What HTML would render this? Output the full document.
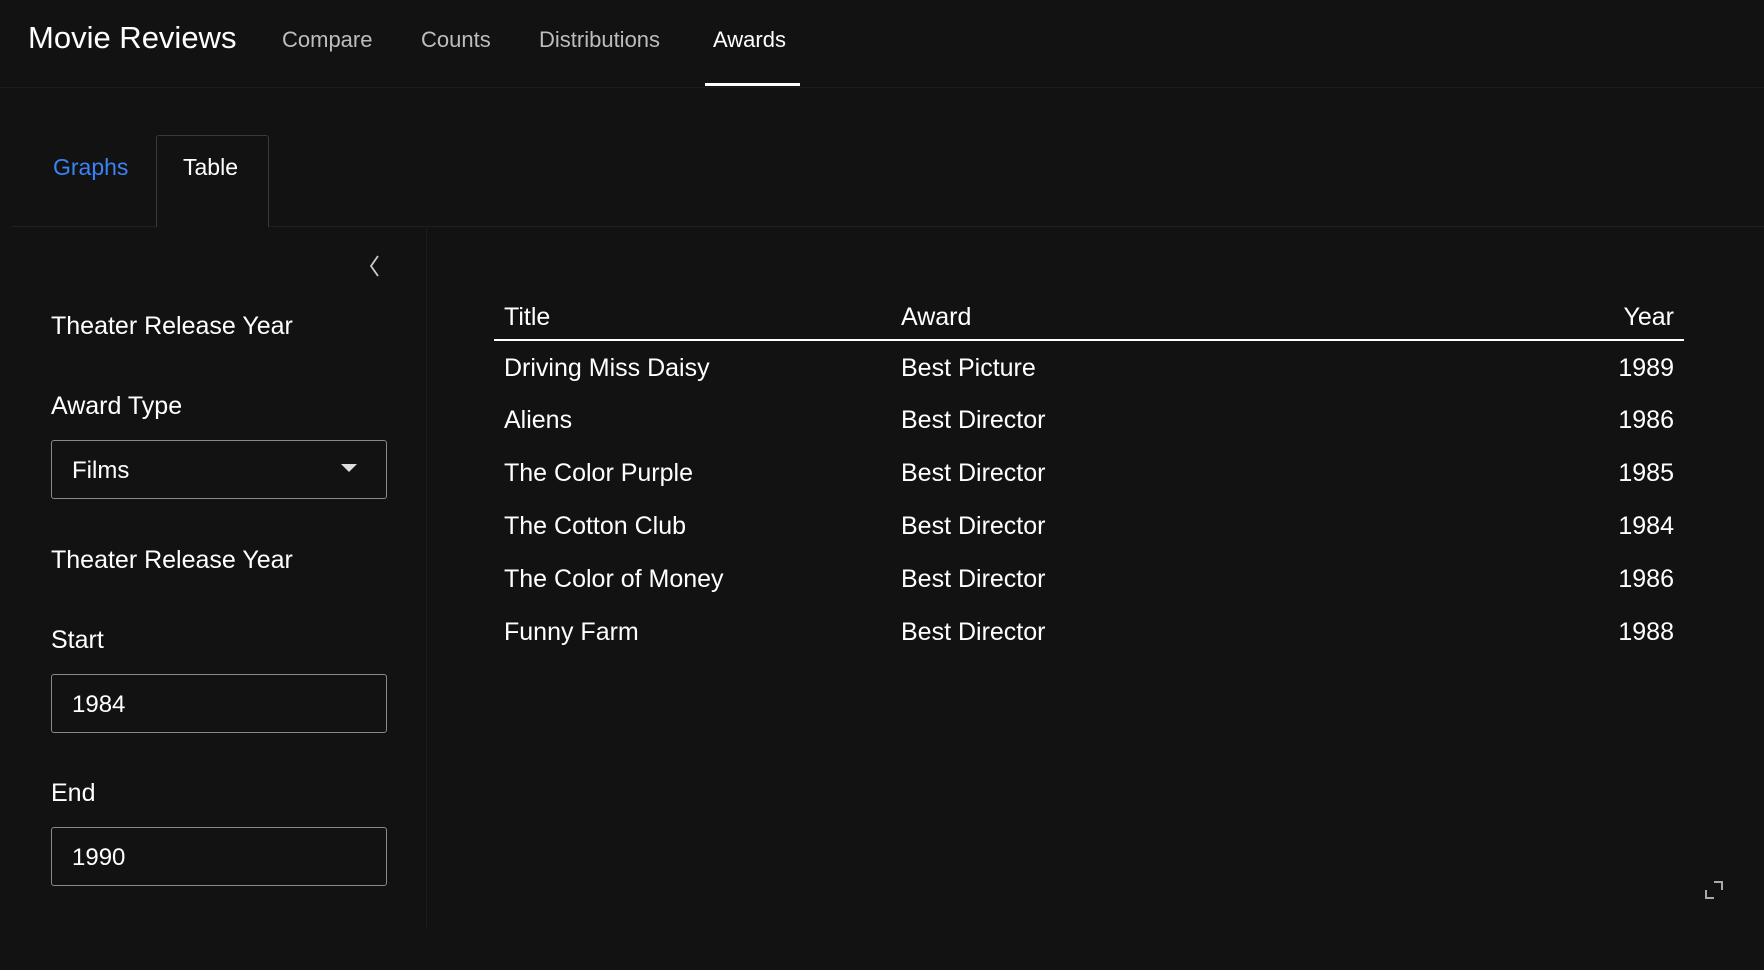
<!DOCTYPE html>
<html><head><meta charset="utf-8"><style>
*{margin:0;padding:0;box-sizing:border-box}
body{width:1764px;height:970px;background:#121212;color:#fff;font-family:"Liberation Sans",sans-serif;position:relative;overflow:hidden}
.a{position:absolute;white-space:nowrap}
.nav{font-size:22px;color:#bdbdbd;top:27px}
.lbl{font-size:25px;left:51px}
.box{position:absolute;left:51px;width:336px;height:59px;border:1px solid #8a8a8a;border-radius:3px;font-size:24px;padding:16px 0 0 20px}
td{font-size:25px;height:53px;padding:0 10px;position:relative;top:1px}
th{font-size:25px;font-weight:normal;text-align:left;padding:0 10px;height:44px;border-bottom:2px solid #fff}
</style></head><body>
<div class="a" style="left:28px;top:20px;font-size:31px">Movie Reviews</div>
<div class="a nav" style="left:282px">Compare</div>
<div class="a nav" style="left:421px">Counts</div>
<div class="a nav" style="left:539px">Distributions</div>
<div class="a nav" style="left:713px;color:#fff">Awards</div>
<div class="a" style="left:705px;top:83px;width:95px;height:3px;background:#fff"></div>
<div class="a" style="left:0;top:87px;width:1764px;height:1px;background:#1c1c1c"></div>
<div class="a" style="left:53px;top:154px;font-size:23px;color:#3b82f6">Graphs</div>
<div class="a" style="left:156px;top:135px;width:113px;height:92px;border:1px solid #3a3a3a;border-bottom:none;border-radius:3px 3px 0 0;background:#121212"></div>
<div class="a" style="left:183px;top:154px;font-size:23px">Table</div>
<div class="a" style="left:11px;top:226px;width:145px;height:1px;background:#1f1f1f"></div>
<div class="a" style="left:269px;top:226px;width:1495px;height:1px;background:#1f1f1f"></div>
<div class="a" style="left:426px;top:226px;width:1px;height:702px;background:#1c1c1c"></div>
<svg class="a" style="left:366px;top:254px" width="18" height="24"><path d="M12 2 L5 12 L12 22" fill="none" stroke="#ccc" stroke-width="1.8"/></svg>
<div class="a lbl" style="top:312px">Theater Release Year</div>
<div class="a lbl" style="top:392px">Award Type</div>
<div class="box" style="top:440px">Films</div>
<svg class="a" style="left:340px;top:463px" width="18" height="12"><path d="M1 1 L17 1 L9 9 Z" fill="#ddd"/></svg>
<div class="a lbl" style="top:546px">Theater Release Year</div>
<div class="a lbl" style="top:626px">Start</div>
<div class="box" style="top:674px">1984</div>
<div class="a lbl" style="top:779px">End</div>
<div class="box" style="top:827px">1990</div>
<table class="a" style="left:494px;top:296px;width:1190px;border-collapse:collapse">
<tr><th style="width:397px">Title</th><th>Award</th><th style="text-align:right">Year</th></tr>
<tr><td>Driving Miss Daisy</td><td>Best Picture</td><td style="text-align:right">1989</td></tr>
<tr><td>Aliens</td><td>Best Director</td><td style="text-align:right">1986</td></tr>
<tr><td>The Color Purple</td><td>Best Director</td><td style="text-align:right">1985</td></tr>
<tr><td>The Cotton Club</td><td>Best Director</td><td style="text-align:right">1984</td></tr>
<tr><td>The Color of Money</td><td>Best Director</td><td style="text-align:right">1986</td></tr>
<tr><td>Funny Farm</td><td>Best Director</td><td style="text-align:right">1988</td></tr>
</table>
<svg class="a" style="left:1704px;top:880px" width="20" height="20"><path d="M10 2 H18 V10 M2 10 V18 H10" fill="none" stroke="#aaa" stroke-width="2"/></svg>
</body></html>
